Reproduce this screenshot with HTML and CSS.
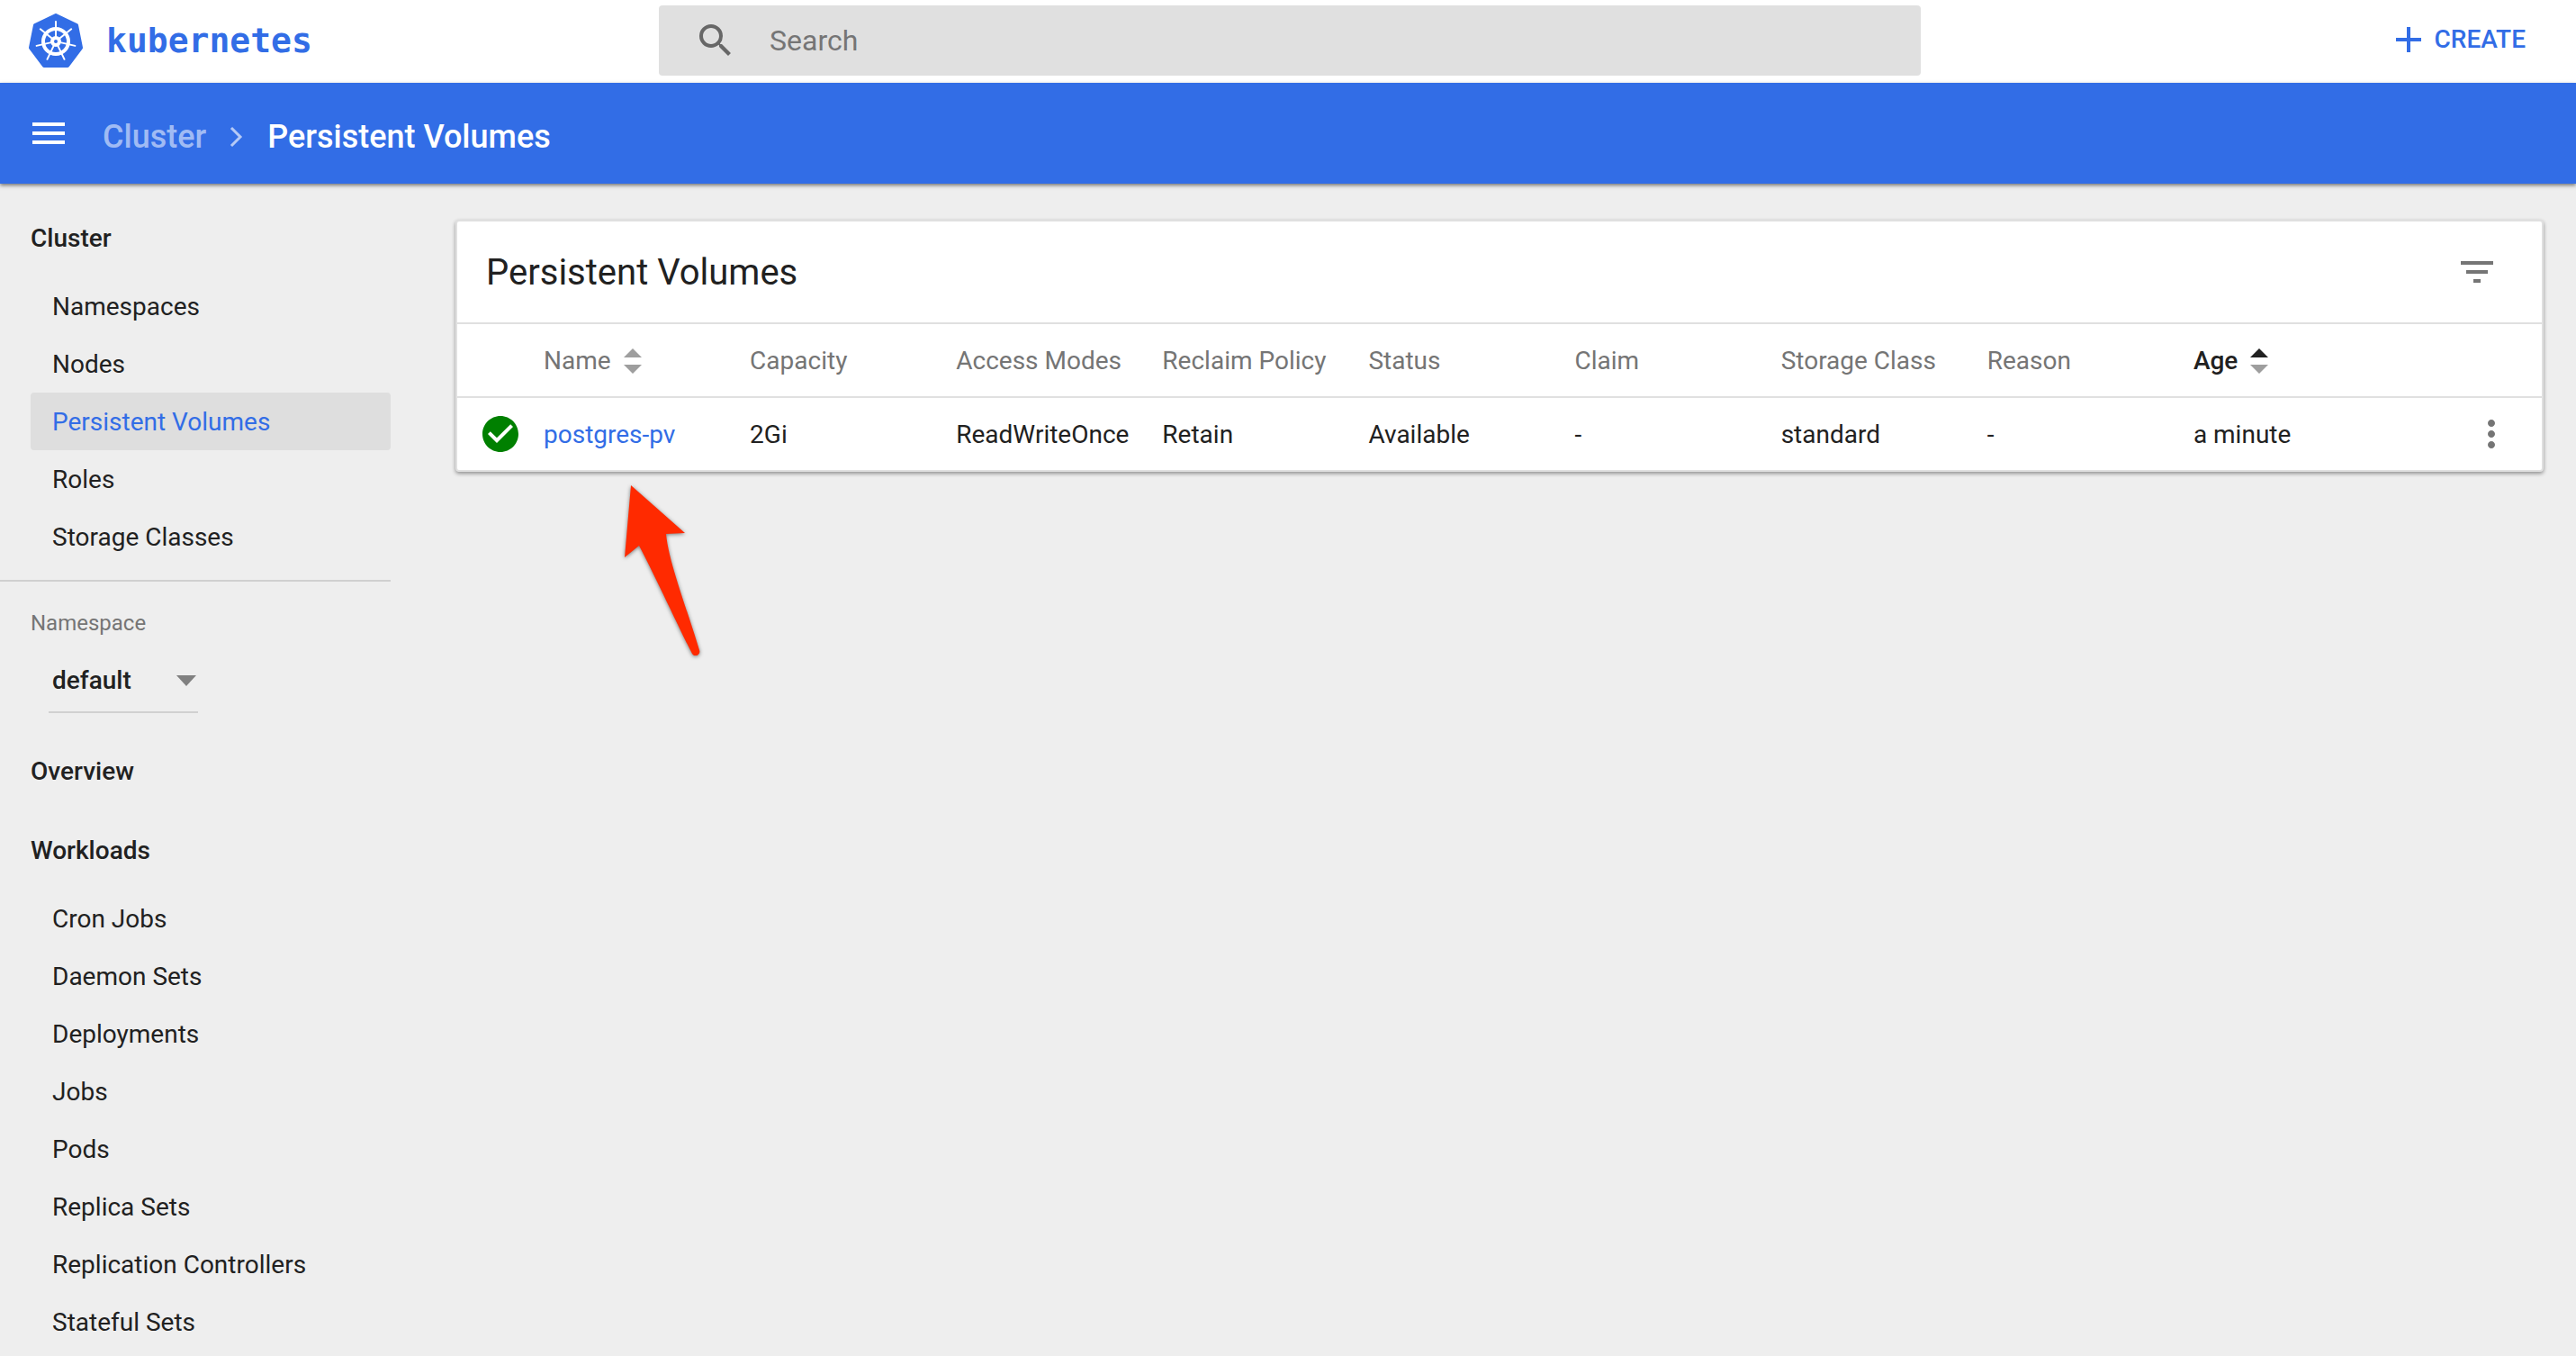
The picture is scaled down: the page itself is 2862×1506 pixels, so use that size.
FILE: index.html
```html
<!DOCTYPE html>
<html lang="en">
<head>
<meta charset="utf-8">
<title>Persistent Volumes - Kubernetes Dashboard</title>
<link rel="stylesheet" href="styles.css">
</head>
<body>
<header class="topbar">
  <a class="brand" href="#">
    <svg class="brand-mark" viewBox="0 0 60 60" aria-hidden="true">
      <path d="M30 2L53 13L58 38L43 58H17L2 38L7 13Z" fill="#326de6" stroke="#326de6" stroke-width="4" stroke-linejoin="round"/>
      <g stroke="#fff" fill="none" stroke-linecap="round">
        <circle cx="30" cy="31" r="14" stroke-width="4"/>
        <g stroke-width="2">
          <path id="spoke" d="M30 27V9"/>
          <use href="#spoke" transform="rotate(51.43 30 31)"/>
          <use href="#spoke" transform="rotate(102.86 30 31)"/>
          <use href="#spoke" transform="rotate(154.29 30 31)"/>
          <use href="#spoke" transform="rotate(205.71 30 31)"/>
          <use href="#spoke" transform="rotate(257.14 30 31)"/>
          <use href="#spoke" transform="rotate(308.57 30 31)"/>
        </g>
        <circle cx="30" cy="31" r="4" stroke-width="4"/>
      </g>
    </svg>
    <span class="brand-name">kubernetes</span>
  </a>
  <label class="search">
    <svg class="icon" viewBox="0 0 24 24" aria-hidden="true"><path d="M15.500 14h-.79l-.28-.27A6.471 6.471 0 0 0 16 9.500 6.500 6.500 0 1 0 9.500 16c1.610 0 3.090-.59 4.230-1.570l.27.28v.79l5 4.990L20.490 19l-4.990-5zm-6 0C7.010 14 5 11.990 5 9.500S7.010 5 9.500 5 14 7.010 14 9.500 11.990 14 9.500 14z"/></svg>
    <input class="search-input" type="text" placeholder="Search" aria-label="Search">
  </label>
  <button class="create" type="button">
    <svg class="icon" viewBox="0 0 24 24" aria-hidden="true"><path d="M19 13h-6v6h-2v-6H5v-2h6V5h2v6h6v2z"/></svg>
    <span>CREATE</span>
  </button>
</header>

<div class="actionbar">
  <button class="menu" type="button" aria-label="Toggle menu">
    <svg class="icon" viewBox="0 0 24 24" aria-hidden="true"><path d="M3 18h18v-2H3v2zm0-5h18v-2H3v2zm0-7v2h18V6H3z"/></svg>
  </button>
  <nav class="crumbs" aria-label="Breadcrumb">
    <a class="crumb" href="#">Cluster</a>
    <svg class="crumb-sep" viewBox="0 0 16 24" aria-hidden="true"><path d="M2 2L12 12L2 22"/></svg>
    <span class="crumb-current">Persistent Volumes</span>
  </nav>
</div>

<div class="layout">
  <nav class="sidebar">
    <a class="group" href="#">Cluster</a>
    <a class="item" href="#">Namespaces</a>
    <a class="item" href="#">Nodes</a>
    <a class="item item-active" href="#">Persistent Volumes</a>
    <a class="item" href="#">Roles</a>
    <a class="item" href="#">Storage Classes</a>
    <div class="namespace">
      <label class="namespace-label" for="namespace">Namespace</label>
      <div class="picker">
        <select class="picker-select" id="namespace"><option>default</option></select>
        <svg class="picker-arrow" viewBox="0 0 22 12" aria-hidden="true"><path d="M0 0H22L11 12Z"/></svg>
      </div>
    </div>
    <a class="group" href="#">Overview</a>
    <a class="group" href="#">Workloads</a>
    <a class="item" href="#">Cron Jobs</a>
    <a class="item" href="#">Daemon Sets</a>
    <a class="item" href="#">Deployments</a>
    <a class="item" href="#">Jobs</a>
    <a class="item" href="#">Pods</a>
    <a class="item" href="#">Replica Sets</a>
    <a class="item" href="#">Replication Controllers</a>
    <a class="item" href="#">Stateful Sets</a>
  </nav>

  <main class="content">
    <section class="card">
      <div class="card-head">
        <h1 class="card-title">Persistent Volumes</h1>
        <button class="icon-button" type="button" aria-label="Filter">
          <svg class="icon" viewBox="0 0 24 24" aria-hidden="true"><path d="M10 18h4v-2h-4v2zM3 6v2h18V6H3zm3 7h12v-2H6v2z"/></svg>
        </button>
      </div>
      <table class="volumes">
        <colgroup><col class="col-status"><col span="9"><col class="col-menu"></colgroup>
        <thead>
          <tr>
            <th></th>
            <th><button class="sort" type="button">Name <svg class="sort-icon" viewBox="0 0 20 28" aria-hidden="true"><path d="M0 10L10 0L20 10Z"/><path d="M0 18H20L10 28Z"/></svg></button></th>
            <th>Capacity</th>
            <th>Access Modes</th>
            <th>Reclaim Policy</th>
            <th>Status</th>
            <th>Claim</th>
            <th>Storage Class</th>
            <th>Reason</th>
            <th aria-sort="ascending"><button class="sort sort-active" type="button">Age <svg class="sort-icon" viewBox="0 0 20 28" aria-hidden="true"><path class="sort-on" d="M0 10L10 0L20 10Z"/><path d="M0 18H20L10 28Z"/></svg></button></th>
            <th></th>
          </tr>
        </thead>
        <tbody>
          <tr>
            <td class="cell-status"><svg class="icon icon-ok" viewBox="0 0 24 24" role="img" aria-label="Available"><path d="M12 2C6.480 2 2 6.480 2 12s4.480 10 10 10 10-4.480 10-10S17.520 2 12 2zm-2 15l-5-5 1.410-1.410L10 14.170l7.590-7.590L19 8l-9 9z"/></svg></td>
            <td><a class="link" href="#">postgres-pv</a></td>
            <td>2Gi</td>
            <td>ReadWriteOnce</td>
            <td>Retain</td>
            <td>Available</td>
            <td>-</td>
            <td>standard</td>
            <td>-</td>
            <td>a minute</td>
            <td class="cell-menu"><button class="icon-button" type="button" aria-label="Actions"><svg class="icon" viewBox="0 0 24 24" aria-hidden="true"><path d="M12 8c1.100 0 2-.9 2-2s-.9-2-2-2-2 .9-2 2 .9 2 2 2zm0 2c-1.100 0-2 .9-2 2s.9 2 2 2 2-.9 2-2-.9-2-2-2zm0 6c-1.100 0-2 .9-2 2s.9 2 2 2 2-.9 2-2-.9-2-2-2z"/></svg></button></td>
          </tr>
        </tbody>
      </table>
    </section>
    <svg class="pointer" viewBox="0 0 88 192" aria-hidden="true"><path d="M9 3L69 56L48 57C51 89 71 139 85 186C87 191 80 195 77 190C61 159 38 108 18 70L2 83Z"/></svg>
  </main>
</div>
</body>
</html>
```
FILE: styles.css
```css
* {
  box-sizing: border-box;
}

body {
  margin: 0;
  background: #eee;
  color: #212121;
  font-family: Roboto, "Liberation Sans", sans-serif;
  font-size: 28px;
  line-height: 40px;
}

a {
  color: inherit;
  text-decoration: none;
}

button,
input,
select {
  margin: 0;
  padding: 0;
  border: 0;
  background: none;
  color: inherit;
  font: inherit;
}

svg {
  display: block;
  flex: none;
}

.icon {
  width: 48px;
  height: 48px;
  fill: currentColor;
}

/* Top bar */
.topbar {
  display: grid;
  grid-template-columns: 732px 1fr 728px;
  align-items: center;
  height: 92px;
  padding-bottom: 2px;
  background: #fff;
}

.brand {
  display: flex;
  align-items: center;
  gap: 26px;
  padding-left: 32px;
  color: #326de6;
}

.brand-mark {
  width: 60px;
  height: 60px;
}

.brand-name {
  font-family: "DejaVu Sans Mono", monospace;
  font-weight: 700;
  font-size: 38px;
  line-height: 44px;
}

.search {
  display: flex;
  align-items: center;
  gap: 36px;
  height: 78px;
  padding: 0 39px;
  border-radius: 4px;
  background: #e0e0e0;
  color: #676767;
}

.search-input {
  flex: 1;
  outline: 0;
  font-size: 32px;
}

.search-input::placeholder {
  color: #757575;
  opacity: 1;
}

.create {
  display: flex;
  align-items: center;
  justify-self: end;
  gap: 5px;
  margin-right: 56px;
  padding-bottom: 2px;
  color: #326de6;
  font-weight: 500;
}

/* Action bar */
.actionbar {
  position: relative;
  display: flex;
  align-items: center;
  gap: 36px;
  height: 112px;
  padding: 0 30px;
  background: #326de6;
  box-shadow: 0 2px 4px rgba(0, 0, 0, 0.5);
  color: #fff;
  font-weight: 500;
  font-size: 36px;
}

.crumbs {
  display: flex;
  align-items: center;
  gap: 26px;
  padding-top: 8px;
}

.crumb {
  color: #a0bbf4;
}

.crumb-sep {
  width: 16px;
  height: 24px;
  fill: none;
  stroke: #b5c9f6;
  stroke-width: 3;
}

/* Layout */
.layout {
  display: flex;
}

.sidebar {
  display: flex;
  flex-direction: column;
  flex: none;
  width: 434px;
  padding: 16px 0 6px 34px;
}

.group {
  padding: 25px 0 23px;
  font-weight: 500;
}

.item {
  padding: 13px 24px 11px;
  border-radius: 4px;
}

.item-active {
  background: #dedede;
  color: #326de6;
}

.namespace {
  margin: 16px 0 20px -34px;
  padding: 26px 0 0 34px;
  border-top: 2px solid #d0d0d0;
}

.namespace-label {
  display: block;
  color: #757575;
  font-size: 24px;
}

.picker {
  display: flex;
  align-items: center;
  width: 166px;
  height: 80px;
  margin: 0 20px;
  padding-top: 10px;
  border-bottom: 2px solid #d0d0d0;
}

.picker-select {
  flex: 1;
  min-width: 0;
  padding-left: 4px;
  appearance: none;
  font-weight: 500;
}

.picker-arrow {
  width: 22px;
  height: 12px;
  margin-right: 2px;
  fill: #808080;
}

/* Content */
.content {
  position: relative;
  flex: 1;
  min-width: 0;
  padding: 40px 36px 40px 72px;
}

.card {
  border: 2px solid #e0e0e0;
  border-radius: 4px;
  background: #fff;
  box-shadow: 0 2px 4px rgba(0, 0, 0, 0.4);
}

.card-head {
  display: flex;
  align-items: center;
  justify-content: space-between;
  height: 114px;
  padding: 0 48px 0 32px;
  border-bottom: 2px solid #e0e0e0;
}

.card-title {
  margin: 0;
  padding-top: 2px;
  font-weight: 400;
  font-size: 40px;
  line-height: 48px;
}

.icon-button {
  display: block;
  color: #757575;
}

.volumes {
  width: 100%;
  border-spacing: 0;
  table-layout: fixed;
}

.col-status {
  width: 96px;
}

.col-menu {
  width: 158px;
}

.volumes th,
.volumes td {
  height: 80px;
  padding: 2px 0 0;
  text-align: left;
  white-space: nowrap;
}

.volumes th {
  height: 82px;
  border-bottom: 2px solid #e0e0e0;
  color: #757575;
  font-weight: 400;
}

.volumes .cell-status {
  padding: 0 0 0 24px;
}

.volumes .cell-menu {
  padding: 0 0 0 78px;
}

.icon-ok {
  fill: #008000;
}

.link {
  color: #326de6;
}

.sort {
  display: flex;
  align-items: center;
  gap: 14px;
}

.sort-active {
  color: #212121;
  font-weight: 500;
}

.sort-icon {
  width: 20px;
  height: 28px;
  fill: #9e9e9e;
}

.sort-on {
  fill: #212121;
}

/* Annotation arrow over the page */
.pointer {
  position: absolute;
  top: 332px;
  left: 258px;
  width: 88px;
  height: 192px;
  fill: #ff2a00;
  filter: drop-shadow(0 1px 2px rgba(0, 0, 0, 0.5));
}
```
